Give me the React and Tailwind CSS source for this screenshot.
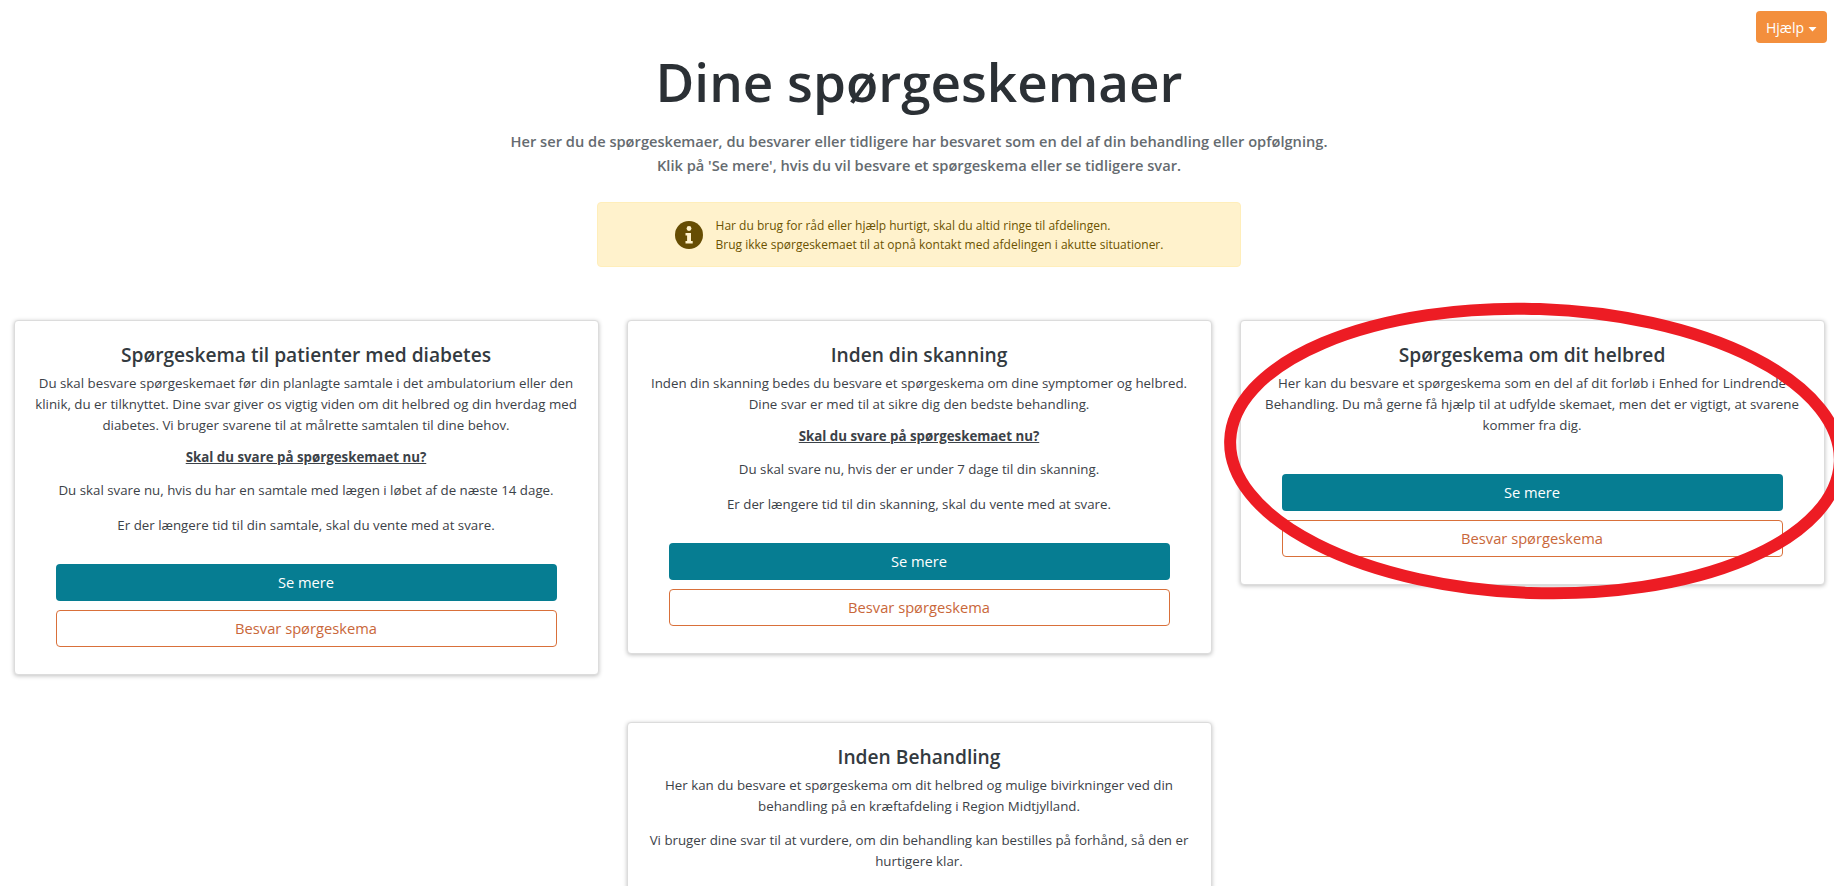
const font = { fontFamily: '"Open Sans", sans-serif' };

function Card({ title, children, buttons = true, wide = false }) {
  return (
    <div className="w-[585px] bg-white border border-[#dcdcdc] rounded-[4px] shadow-[0_1px_4px_rgba(0,0,0,0.25)] px-[20px] pt-[20px] pb-[27px] text-center">
      <h2 className="text-[19.2px] leading-[28px] font-semibold text-[#333a40] mb-[4px]">{title}</h2>
      <div className="text-[13.3px] leading-[21px] text-[#3c4248]">{children}</div>
      {buttons && (
        <div className={`flex flex-col gap-[9px] mx-[21px] ${wide ? "mt-[38px]" : "mt-[28px]"}`}>
          <button className="h-[37px] rounded-[4px] bg-[#067d92] text-white text-[14.7px]">Se mere</button>
          <button className="h-[37px] rounded-[4px] bg-white border border-[#d9703a] text-[#c9673a] text-[14.7px]">Besvar spørgeskema</button>
        </div>
      )}
    </div>
  );
}

export default function App() {
  return (
    <div className="relative h-screen overflow-hidden bg-white pl-[4px]" style={font}>
      <button className="absolute right-[7px] top-[11px] h-[32px] w-[71px] rounded-[4px] bg-[#f38f3d] text-white text-[14px] flex items-center justify-center gap-[4px]">
        Hjælp
        <svg width="9" height="6" viewBox="0 0 9 6" className="mt-[3px]"><path d="M0.5 1h8L4.5 5.5z" fill="#fff" /></svg>
      </button>

      <header className="flex flex-col items-center pt-[42px]">
        <h1 className="text-[53px] leading-[80px] font-semibold text-[#2b3035]">Dine spørgeskemaer</h1>
        <p className="mt-[7px] text-[14.65px] leading-[24px] font-semibold text-[#656b70] text-center">
          Her ser du de spørgeskemaer, du besvarer eller tidligere har besvaret som en del af din behandling eller opfølgning.
          <br />
          Klik på 'Se mere', hvis du vil besvare et spørgeskema eller se tidligere svar.
        </p>
        <div className="mt-[25px] w-[644px] h-[65px] rounded-[4px] bg-[#fff2cc] border border-[#ffeeba] flex items-center justify-center gap-[13px] text-[12px] leading-[19px] text-[#6b5200]">
          <svg width="28" height="28" viewBox="0 0 28 28">
            <circle cx="14" cy="14" r="14" fill="#664d03" />
            <circle cx="14" cy="7.5" r="2.4" fill="#fff2cc" />
            <path d="M10.5 12h5.5v8h1.7v2.5h-7.2V20h1.6v-5.5h-1.6z" fill="#fff2cc" />
          </svg>
          <div>
            <div>Har du brug for råd eller hjælp hurtigt, skal du altid ringe til afdelingen.</div>
            <div>Brug ikke spørgeskemaet til at opnå kontakt med afdelingen i akutte situationer.</div>
          </div>
        </div>
      </header>

      <main className="flex flex-wrap justify-center items-start gap-x-[28px] gap-y-[47px] mt-[53px]">
        <Card title="Spørgeskema til patienter med diabetes">
          <p>Du skal besvare spørgeskemaet før din planlagte samtale i det ambulatorium eller den klinik, du er tilknyttet. Dine svar giver os vigtig viden om dit helbred og din hverdag med diabetes. Vi bruger svarene til at målrette samtalen til dine behov.</p>
          <p className="mt-[11px] font-bold underline">Skal du svare på spørgeskemaet nu?</p>
          <p className="mt-[12px]">Du skal svare nu, hvis du har en samtale med lægen i løbet af de næste 14 dage.</p>
          <p className="mt-[14px]">Er der længere tid til din samtale, skal du vente med at svare.</p>
        </Card>
        <Card title="Inden din skanning">
          <p>Inden din skanning bedes du besvare et spørgeskema om dine symptomer og helbred. Dine svar er med til at sikre dig den bedste behandling.</p>
          <p className="mt-[11px] font-bold underline">Skal du svare på spørgeskemaet nu?</p>
          <p className="mt-[12px]">Du skal svare nu, hvis der er under 7 dage til din skanning.</p>
          <p className="mt-[14px]">Er der længere tid til din skanning, skal du vente med at svare.</p>
        </Card>
        <Card title="Spørgeskema om dit helbred" wide>
          <p>Her kan du besvare et spørgeskema som en del af dit forløb i Enhed for Lindrende Behandling. Du må gerne få hjælp til at udfylde skemaet, men det er vigtigt, at svarene kommer fra dig.</p>
        </Card>
        <Card title="Inden Behandling" buttons={false}>
          <p>Her kan du besvare et spørgeskema om dit helbred og mulige bivirkninger ved din behandling på en kræftafdeling i Region Midtjylland.</p>
          <p className="mt-[13px]">Vi bruger dine svar til at vurdere, om din behandling kan bestilles på forhånd, så den er hurtigere klar.</p>
          <div className="h-[120px]" />
        </Card>
      </main>

      <svg className="absolute left-[1220px] top-[296px] pointer-events-none" width="614" height="312" viewBox="0 0 614 312">
        <ellipse cx="315" cy="155" rx="305" ry="142" fill="none" stroke="#ed1c24" strokeWidth="12" transform="rotate(2 315 155)" />
      </svg>
    </div>
  );
}
